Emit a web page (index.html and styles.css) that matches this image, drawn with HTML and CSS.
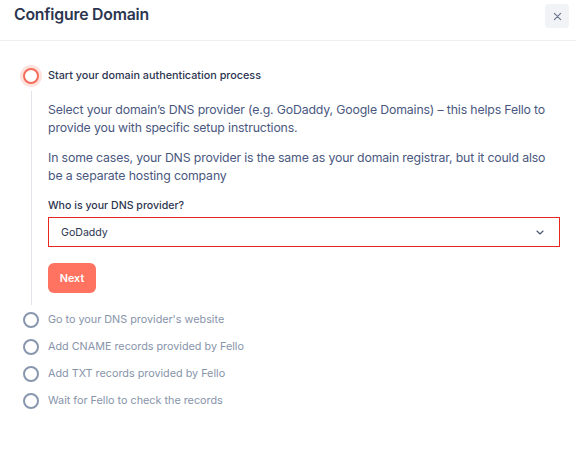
FILE: index.html
```html
<!DOCTYPE html>
<html>
<head>
<meta charset="utf-8">
<link rel="stylesheet" href="styles.css">
</head>
<body>
<div class="modal">
  <header class="header">
    <h1 class="title">Configure Domain</h1>
    <button class="close" aria-label="Close">
      <svg width="9" height="9" viewBox="0 0 10 10"><path d="M1.5 1.5L8.5 8.5M8.5 1.5L1.5 8.5" stroke="#6b7690" stroke-width="1.3" stroke-linecap="round"/></svg>
    </button>
  </header>
  <div class="steps">
    <div class="step active">
      <div class="rail">
        <span class="dot dot-active"></span>
        <span class="line"></span>
      </div>
      <div class="content">
        <div class="step-title">Start your domain authentication process</div>
        <p class="desc">Select your domain’s DNS provider (e.g. GoDaddy, Google Domains) – this helps Fello to provide you with specific setup instructions.</p>
        <p class="desc">In some cases, your DNS provider is the same as your domain registrar, but it could also be a separate hosting company</p>
        <label class="label">Who is your DNS provider?</label>
        <div class="select">
          <span>GoDaddy</span>
          <svg width="8" height="5" viewBox="0 0 10 6"><path d="M1.2 1.2L5 4.8L8.8 1.2" stroke="#4b5670" stroke-width="1.5" fill="none" stroke-linecap="round" stroke-linejoin="round"/></svg>
        </div>
        <button class="next">Next</button>
      </div>
    </div>
    <div class="step pending"><div class="rail"><span class="dot"></span></div><div class="step-title">Go to your DNS provider's website</div></div>
    <div class="step pending"><div class="rail"><span class="dot"></span></div><div class="step-title">Add CNAME records provided by Fello</div></div>
    <div class="step pending"><div class="rail"><span class="dot"></span></div><div class="step-title">Add TXT records provided by Fello</div></div>
    <div class="step pending"><div class="rail"><span class="dot"></span></div><div class="step-title">Wait for Fello to check the records</div></div>
  </div>
</div>
</body>
</html>
```
FILE: styles.css
```css
* { box-sizing: border-box; }
html, body { margin: 0; padding: 0; background: #fff; }
body { font-family: Inter, "Noto Sans", sans-serif; color: #2c3550; }
.modal { width: 576px; height: 460px; }
.header {
  height: 41px;
  display: flex;
  align-items: flex-start;
  justify-content: space-between;
  padding: 4px 7px 0 14px;
  border-bottom: 1px solid #eceef2;
}
.title { margin: 1px 0 0; font-size: 15.8px; font-weight: 600; line-height: 20px; letter-spacing: -0.2px; color: #2c3550; }
.close {
  width: 24px; height: 24px; border: 0; border-radius: 4px;
  background: #f1f3f7; display: flex; align-items: center; justify-content: center; padding: 0;
}
.steps { padding: 26px 16px 0 14px; }
.step { display: flex; }
.active { margin-bottom: 6px; }
.rail { width: 34px; display: flex; flex-direction: column; align-items: center; flex-shrink: 0; }
.dot {
  width: 16px; height: 16px; border-radius: 50%;
  border: 2px solid #8897ae; background: #fff; flex-shrink: 0; margin-top: 1px;
}
.dot-active { border: 2.5px solid #f46d5b; box-shadow: 0 0 0 3px #fde2de; }
.line { width: 1px; background: #e1e5eb; flex: 1; margin-top: 7px; }
.content { flex: 1; padding-bottom: 12px; }
.step-title { font-size: 10.8px; font-weight: 500; line-height: 18px; color: #2c3550; }
.active .step-title { padding-bottom: 16px; }
.pending { margin-bottom: 9px; }
.pending .step-title { color: #8794aa; font-weight: 400; }
.desc { margin: 0 0 12px; font-size: 12.3px; letter-spacing: -0.15px; line-height: 18px; color: #4a5880; }
.label { display: block; margin-top: 13px; font-size: 10.6px; font-weight: 500; color: #2c3550; line-height: 16px; }
.select {
  margin-top: 3px; height: 30px; border: 1.5px solid #e6281f;
  display: flex; align-items: center; justify-content: space-between;
  padding: 0 15px 0 12px; font-size: 10.6px; color: #2c3550;
}
.next {
  margin-top: 16px; height: 30px; width: 48px; border: 0; border-radius: 6px;
  background: #ff7360; color: #fff; font-family: inherit; font-size: 10.8px; font-weight: 600; padding: 0;
}
```
